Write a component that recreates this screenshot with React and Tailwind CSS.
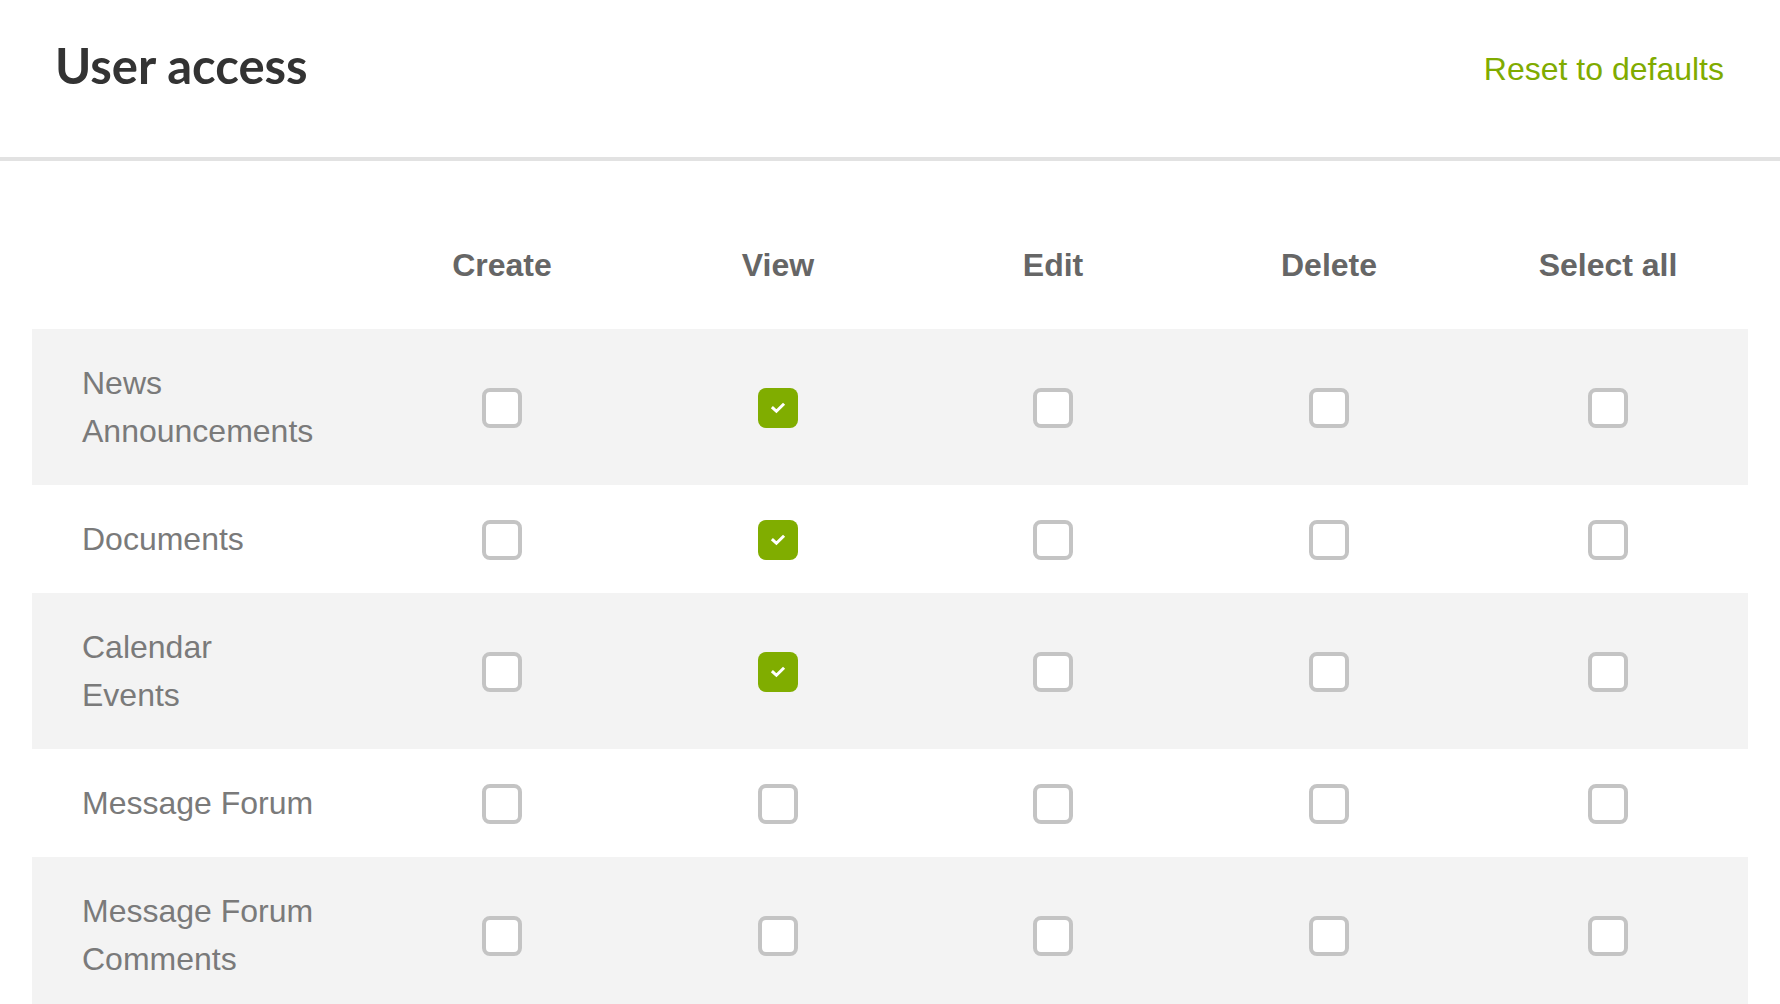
import { useState } from "react";

const COLUMNS = ["Create", "View", "Edit", "Delete", "Select all"];

const SECTIONS = [
  { id: "news", lines: ["News", "Announcements"], checked: [false, true, false, false, false] },
  { id: "documents", lines: ["Documents"], checked: [false, true, false, false, false] },
  { id: "calendar", lines: ["Calendar", "Events"], checked: [false, true, false, false, false] },
  { id: "forum", lines: ["Message Forum"], checked: [false, false, false, false, false] },
  { id: "comments", lines: ["Message Forum", "Comments"], checked: [false, false, false, false, false] },
];

const grid = "grid grid-cols-[332px_276px_276px_274px_278px_280px]";

function Checkbox({ checked, onToggle }) {
  return (
    <button
      type="button"
      onClick={onToggle}
      aria-pressed={checked}
      className={`flex h-10 w-10 items-center justify-center rounded-[8px] ${
        checked ? "bg-[#80ad00]" : "border-[4px] border-[#c4c4c4] bg-white"
      }`}
    >
      {checked && (
        <svg width="16" height="12" viewBox="0 0 16 12" fill="none">
          <path d="M3 6.2 L6.4 9.3 L13 2.8" stroke="white" strokeWidth="3" strokeLinecap="square" />
        </svg>
      )}
    </button>
  );
}

export default function App() {
  const [rows, setRows] = useState(SECTIONS);

  const toggle = (rowId, col) =>
    setRows((prev) =>
      prev.map((r) =>
        r.id === rowId ? { ...r, checked: r.checked.map((c, i) => (i === col ? !c : c)) } : r
      )
    );

  return (
    <div className="min-h-screen bg-white font-['Liberation_Sans',Arial,sans-serif]">
      {/* Page header */}
      <header className="flex h-[161px] items-start justify-between border-b-4 border-[#e2e2e2] pl-[55px] pr-[56px]">
        <h1 className="mt-[29px] font-['Lato',sans-serif] text-[49px] font-bold leading-normal text-[#333333]">
          User access
        </h1>
        <a href="#" className="mt-[45px] text-[32px] leading-normal text-[#80ab00]">
          Reset to defaults
        </a>
      </header>

      {/* Permission matrix */}
      <div className="mx-[32px] mt-[40px]">
        <div className={`${grid} h-[128px] items-center`}>
          <div />
          {COLUMNS.map((c) => (
            <div key={c} className="text-center text-[32px] font-bold leading-[48px] text-[#666666]">
              {c}
            </div>
          ))}
        </div>

        {rows.map((row, idx) => (
          <div key={row.id} className={`${idx % 2 === 0 ? "bg-[#f3f3f3]" : "bg-white"} py-[30px]`}>
            <div className={`${grid} items-center`}>
              <div className="pl-[50px] text-[32px] leading-[48px] text-[#7a7a7a]">
                {row.lines.map((l) => (
                  <div key={l}>{l}</div>
                ))}
              </div>
              {row.checked.map((c, i) => (
                <div key={i} className="flex justify-center pt-[2px]">
                  <Checkbox checked={c} onToggle={() => toggle(row.id, i)} />
                </div>
              ))}
            </div>
          </div>
        ))}
      </div>
    </div>
  );
}
